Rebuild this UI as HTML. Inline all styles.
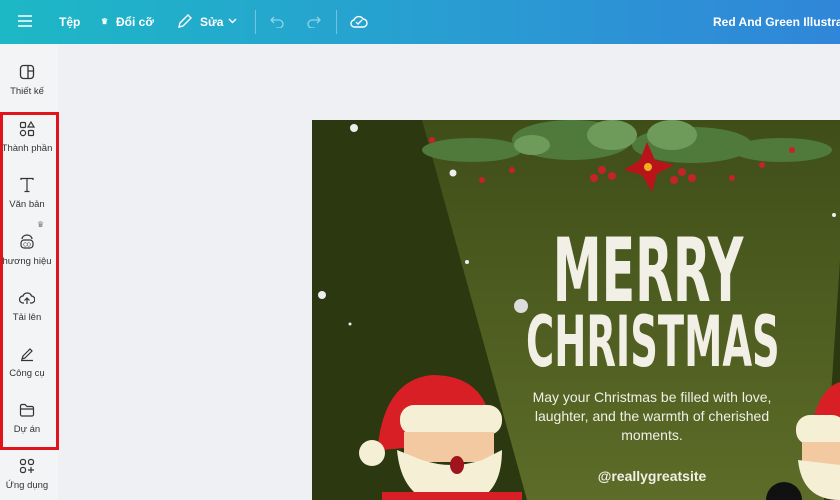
<!DOCTYPE html>
<html><head><meta charset="utf-8"><style>
*{margin:0;padding:0;box-sizing:border-box}
body{width:840px;height:500px;overflow:hidden;background:#eef0f3;font-family:"Liberation Sans",sans-serif;position:relative}
.top{position:absolute;left:0;top:0;width:840px;height:44px;background:linear-gradient(90deg,#1db8c6,#2a9ad3 60%,#3086d8);color:#fff;font-size:12px;font-weight:bold}
.top span{position:absolute;top:15px}
.side{position:absolute;left:0;top:44px;width:58px;height:456px;background:#f3f4f6}
.it{position:absolute;left:0;width:54px;text-align:center;font-size:9.5px;color:#333;white-space:nowrap}
.it svg{display:block;margin:0 auto 6px}
.red{position:absolute;left:0;top:112px;width:59px;height:338px;border:3px solid #e0141a}
.poster{position:absolute;left:312px;top:120px;width:528px;height:380px;background:#2b3810;overflow:hidden}
.title{position:absolute;left:136px;width:400px;text-align:center;color:#f2efe6;font-family:"DejaVu Sans Condensed","DejaVu Sans",sans-serif;font-weight:bold;white-space:nowrap;transform-origin:center}
</style></head><body>
<div class="top">
<svg style="position:absolute;left:18px;top:15px" width="14" height="12"><path d="M0 1h14M0 6h14M0 11h14" stroke="#fff" stroke-width="1.6"/></svg>
<span style="left:59px">Tệp</span>
<span style="left:101px;font-size:8px;top:17px">♛</span><span style="left:116px">Đổi cỡ</span>
<svg style="position:absolute;left:177px;top:14px" width="15" height="15"><path d="M2 13l1-4 8-8 3 3-8 8z" fill="none" stroke="#fff" stroke-width="1.4"/></svg>
<span style="left:200px">Sửa</span>
<svg style="position:absolute;left:228px;top:18px" width="9" height="6"><path d="M1 1l3.5 3.5L8 1" fill="none" stroke="#fff" stroke-width="1.4"/></svg>
<div style="position:absolute;left:255px;top:10px;width:1px;height:24px;background:rgba(255,255,255,.35)"></div>
<svg style="position:absolute;left:270px;top:15px" width="15" height="13" opacity=".5"><path d="M4 2L1 5l3 3M1 5h8a4 4 0 010 8H6" fill="none" stroke="#fff" stroke-width="1.3"/></svg>
<svg style="position:absolute;left:306px;top:15px" width="15" height="13" opacity=".5"><path d="M11 2l3 3-3 3M14 5H6a4 4 0 000 8h3" fill="none" stroke="#fff" stroke-width="1.3"/></svg>
<div style="position:absolute;left:336px;top:10px;width:1px;height:24px;background:rgba(255,255,255,.35)"></div>
<svg style="position:absolute;left:350px;top:13px" width="18" height="16"><path d="M5 14h8a4 4 0 000-8 5 5 0 00-9 1 3.5 3.5 0 001 7z" fill="none" stroke="#fff" stroke-width="1.4"/><path d="M6 9l2 2 4-4" fill="none" stroke="#fff" stroke-width="1.4"/></svg>
<span style="left:713px;white-space:nowrap">Red And Green Illustrat</span>
</div>
<div class="side">
<div class="it" style="top:20px;left:0"><svg width="16" height="16"><rect x="1.5" y="1.5" width="13" height="13" rx="3" fill="none" stroke="#333" stroke-width="1.3"/><path d="M9 1.5v13M9 7h5" stroke="#333" stroke-width="1.3"/></svg>Thiết kế</div>
<div class="it" style="top:77px"><svg width="16" height="16"><rect x="1.5" y="1.5" width="5" height="5" rx="1" fill="none" stroke="#333" stroke-width="1.2"/><path d="M12 1l3 5h-6z" fill="none" stroke="#333" stroke-width="1.2"/><circle cx="4" cy="12" r="2.6" fill="none" stroke="#333" stroke-width="1.2"/><rect x="9.5" y="9.5" width="5" height="5" rx="1" fill="none" stroke="#333" stroke-width="1.2"/></svg>Thành phần</div>
<div class="it" style="top:133px"><svg width="16" height="16"><path d="M2 3V1.5h12V3M8 1.5v13M5.5 14.5h5" fill="none" stroke="#333" stroke-width="1.2"/></svg>Văn bản</div>
<div style="position:absolute;left:37px;top:176px;font-size:8px;color:#777">♛</div>
<div class="it" style="top:190px"><svg width="16" height="16"><rect x="2" y="6" width="12" height="8" rx="3" fill="none" stroke="#333" stroke-width="1.2"/><path d="M3 5a5 4 0 0110 0" fill="none" stroke="#333" stroke-width="1.2"/><text x="8" y="12.5" font-size="5" text-anchor="middle" fill="#333" font-family="Liberation Sans">CO</text></svg>hương hiệu</div>
<div class="it" style="top:246px"><svg width="16" height="16"><path d="M5 13h-1a3.5 3.5 0 010-7 4.5 4.5 0 018.5 0 3.5 3.5 0 01-.5 7h-1M8 14V8M5.5 10.5L8 8l2.5 2.5" fill="none" stroke="#333" stroke-width="1.2"/></svg>Tải lên</div>
<div class="it" style="top:302px"><svg width="16" height="16"><path d="M4 10l7-7 2 2-7 7-3 1zM2 14.5h12" fill="none" stroke="#333" stroke-width="1.2"/></svg>Công cụ</div>
<div class="it" style="top:358px"><svg width="16" height="16"><path d="M1.5 4a1.5 1.5 0 011.5-1.5h3l2 2h5a1.5 1.5 0 011.5 1.5v6.5a1.5 1.5 0 01-1.5 1.5H3a1.5 1.5 0 01-1.5-1.5zM1.5 7h13" fill="none" stroke="#333" stroke-width="1.2"/></svg>Dự án</div>
<div class="it" style="top:414px"><svg width="16" height="16"><rect x="1.5" y="1.5" width="5" height="5" rx="2" fill="none" stroke="#333" stroke-width="1.2"/><rect x="9.5" y="1.5" width="5" height="5" rx="2" fill="none" stroke="#333" stroke-width="1.2"/><rect x="1.5" y="9.5" width="5" height="5" rx="2" fill="none" stroke="#333" stroke-width="1.2"/><path d="M12 9v6M9 12h6" stroke="#333" stroke-width="1.2"/></svg>Ứng dụng</div>
</div>
<div class="red"></div>
<div class="poster">
<svg width="528" height="380" style="position:absolute;left:0;top:0">
<defs><linearGradient id="g" x1="0" y1="0" x2="0" y2="1"><stop offset="0" stop-color="#3f4e18"/><stop offset="1" stop-color="#5d6c28"/></linearGradient></defs>
<polygon points="110,0 528,0 528,140 512,380 215,380" fill="url(#g)"/>
<g fill="#4f7a3c"><ellipse cx="160" cy="30" rx="50" ry="12"/><ellipse cx="260" cy="20" rx="60" ry="20"/><ellipse cx="380" cy="25" rx="60" ry="18"/><ellipse cx="470" cy="30" rx="50" ry="12"/></g>
<g fill="#6e9a5a"><ellipse cx="300" cy="15" rx="25" ry="15"/><ellipse cx="360" cy="15" rx="25" ry="15"/><ellipse cx="220" cy="25" rx="18" ry="10"/></g>
<g fill="#c4232a"><circle cx="290" cy="50" r="4"/><circle cx="300" cy="56" r="4"/><circle cx="282" cy="58" r="4"/><circle cx="370" cy="52" r="4"/><circle cx="380" cy="58" r="4"/><circle cx="362" cy="60" r="4"/><circle cx="170" cy="60" r="3"/><circle cx="420" cy="58" r="3"/><circle cx="120" cy="20" r="3"/><circle cx="480" cy="30" r="3"/><circle cx="200" cy="50" r="3"/><circle cx="450" cy="45" r="3"/></g>
<polygon points="335,22 343,40 362,45 345,54 340,72 330,55 312,50 328,40" fill="#b8141a"/><circle cx="336" cy="47" r="4" fill="#f2b020"/>
<g fill="#eee"><circle cx="42" cy="8" r="4"/><circle cx="141" cy="53" r="3.5"/><circle cx="10" cy="175" r="4"/><circle cx="209" cy="186" r="7" fill="#ddd"/><circle cx="155" cy="142" r="2"/><circle cx="38" cy="204" r="1.5"/><circle cx="522" cy="95" r="2"/></g>
<path d="M65 335 Q70 260 120 255 Q175 255 180 310 L180 320 L70 330z" fill="#d81f26"/>
<circle cx="60" cy="333" r="13" fill="#f5efd6"/>
<rect x="88" y="285" width="102" height="30" rx="14" fill="#f5efd6"/>
<rect x="92" y="312" width="90" height="30" fill="#f3c9a1"/>
<path d="M85 330 Q90 385 140 385 Q190 385 190 330 L170 340 Q140 350 110 340z" fill="#f5efd6"/>
<ellipse cx="145" cy="345" rx="7" ry="9" fill="#a0141e"/>
<rect x="70" y="372" width="140" height="10" fill="#d81f26"/>
<path d="M495 340 Q500 270 528 262 L528 340z" fill="#d81f26"/>
<rect x="484" y="295" width="50" height="30" rx="14" fill="#f5efd6"/>
<rect x="490" y="322" width="40" height="30" fill="#f3c9a1"/>
<path d="M486 340 Q490 380 528 380 L528 345z" fill="#f5efd6"/>
<circle cx="472" cy="380" r="18" fill="#111"/>
</svg>
<div class="title" style="top:106px;font-size:88px;line-height:90px;transform:scaleX(.62)">MERRY</div>
<div class="title" style="top:186px;font-size:70px;line-height:72px;transform:scaleX(.61)">CHRISTMAS</div>
<div style="position:absolute;left:200px;top:268px;width:280px;text-align:center;color:#f2efe6;font-size:14px;line-height:19px">May your Christmas be filled with love, laughter, and the warmth of cherished moments.</div>
<div style="position:absolute;left:200px;top:348px;width:280px;text-align:center;color:#f2efe6;font-size:14px;font-weight:bold">@reallygreatsite</div>
</div>
</body></html>
